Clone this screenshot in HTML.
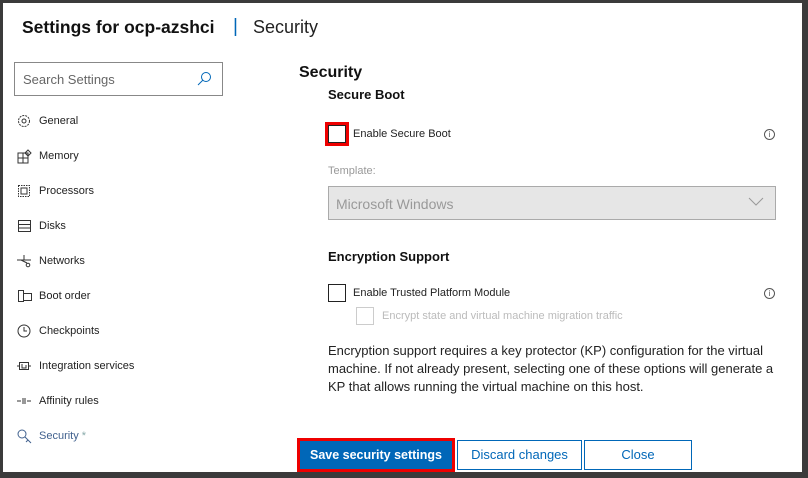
<!DOCTYPE html>
<html><head><meta charset="utf-8"><style>
*{margin:0;padding:0;box-sizing:border-box}
body{width:808px;height:478px;background:#3b3b3b;font-family:"Liberation Sans",sans-serif;position:relative;overflow:hidden}
#w{position:absolute;left:3px;top:3px;width:799px;height:469px;background:#fff}
.a{position:absolute;white-space:nowrap}
.nav{position:absolute;left:17px;font-size:11px;color:#222;white-space:nowrap;width:200px;height:16px}
.nav svg{position:absolute;left:0;top:-1px}
.nav span{position:absolute;left:22px;top:0}
.cb{position:absolute;width:18px;height:18px;border:1px solid #222;background:#fff}
.info{position:absolute;width:11px;height:11px;border:1px solid #555;border-radius:50%;font-size:8px;line-height:9px;text-align:center;color:#555}
.btn{position:absolute;top:440px;height:30px;border:1px solid #0067b8;color:#0067b8;font-size:13px;text-align:center;line-height:28px;background:#fff;white-space:nowrap}
</style></head><body><div id="w"></div>
<div class="a" style="left:22px;top:17px;font-size:17.5px;font-weight:bold;color:#111">Settings for ocp-azshci</div>
<div class="a" style="left:233px;top:16px;font-size:19px;color:#0067b8">|</div>
<div class="a" style="left:253px;top:17px;font-size:18px;color:#222">Security</div>
<div class="a" style="left:14px;top:62px;width:209px;height:34px;border:1px solid #888"></div>
<div class="a" style="left:23px;top:72px;font-size:13px;color:#666">Search Settings</div>
<svg class="a" style="left:196px;top:71px" width="16" height="16"><circle cx="10" cy="6" r="4.5" fill="none" stroke="#0067b8"/><path d="M7 9 L2 14" stroke="#0067b8"/></svg>
<div class="nav" style="top:115px"><svg width="16" height="16"><circle cx="7" cy="7" r="5.5" fill="none" stroke="#333" stroke-dasharray="2 1"/><circle cx="7" cy="7" r="2" fill="none" stroke="#333"/></svg><span>General</span></div>
<div class="nav" style="top:150px"><svg width="16" height="16"><path d="M1 4h10v10H1zM1 9h10M6 4v10" fill="none" stroke="#333"/><path d="M11 1l3 3-3 3-3-3z" fill="none" stroke="#333"/></svg><span>Memory</span></div>
<div class="nav" style="top:185px"><svg width="16" height="16"><rect x="1.5" y="1.5" width="11" height="11" fill="none" stroke="#333" stroke-dasharray="1.5 1"/><rect x="4" y="4" width="6" height="6" fill="none" stroke="#333"/></svg><span>Processors</span></div>
<div class="nav" style="top:220px"><svg width="16" height="16"><rect x="1.5" y="1.5" width="12" height="11" fill="none" stroke="#333"/><path d="M1 5.5h13M1 9h13" stroke="#333"/></svg><span>Disks</span></div>
<div class="nav" style="top:255px"><svg width="16" height="16"><path d="M0 6h14M7 1v5M4 6l6 3" stroke="#333" fill="none"/><circle cx="11" cy="11" r="1.8" fill="none" stroke="#333"/></svg><span>Networks</span></div>
<div class="nav" style="top:290px"><svg width="16" height="16"><rect x="1.5" y="1.5" width="5" height="11" fill="none" stroke="#333"/><rect x="6.5" y="4.5" width="8" height="7" fill="none" stroke="#333"/></svg><span>Boot order</span></div>
<div class="nav" style="top:325px"><svg width="16" height="16"><circle cx="7" cy="7" r="6" fill="none" stroke="#333"/><path d="M7 3v4h3" fill="none" stroke="#333"/></svg><span>Checkpoints</span></div>
<div class="nav" style="top:360px"><svg width="16" height="16"><path d="M0 7h2M12 7h2" stroke="#333"/><rect x="2.5" y="3.5" width="9" height="7" fill="none" stroke="#333"/><path d="M5 5v4h4V6" fill="none" stroke="#333"/></svg><span>Integration services</span></div>
<div class="nav" style="top:395px"><svg width="16" height="16"><path d="M0 7h4M10 7h4M6 4v6M8 4v6" stroke="#333"/></svg><span>Affinity rules</span></div>
<div class="nav" style="top:430px;color:#41618e"><svg width="16" height="16"><circle cx="5" cy="5" r="4" fill="none" stroke="#41618e"/><path d="M8 8l6 6M11 11l-2 2" stroke="#41618e" fill="none"/></svg><span>Security <span style="position:static;color:#8aa">*</span></span></div>
<div class="a" style="left:299px;top:64px;font-size:16px;font-weight:bold;color:#111">Security</div>
<div class="a" style="left:328px;top:87px;font-size:13px;font-weight:bold;color:#111">Secure Boot</div>
<div class="a" style="left:325px;top:122px;width:24px;height:24px;border:3px solid #e00"></div>
<div class="cb" style="left:328px;top:125px"></div>
<div class="a" style="left:353px;top:128px;font-size:11px;color:#222">Enable Secure Boot</div>
<div class="info" style="left:764px;top:129px">i</div>
<div class="a" style="left:328px;top:165px;font-size:11px;color:#999">Template:</div>
<div class="a" style="left:328px;top:186px;width:448px;height:34px;background:#e6e6e6;border:1px solid #aaa"></div>
<div class="a" style="left:336px;top:196px;font-size:14px;color:#999">Microsoft Windows</div>
<svg class="a" style="left:748px;top:197px" width="16" height="10"><path d="M1 1l7 7 7-7" fill="none" stroke="#999"/></svg>
<div class="a" style="left:328px;top:249px;font-size:13px;font-weight:bold;color:#111">Encryption Support</div>
<div class="cb" style="left:328px;top:284px"></div>
<div class="a" style="left:353px;top:287px;font-size:11px;color:#222">Enable Trusted Platform Module</div>
<div class="info" style="left:764px;top:288px">i</div>
<div class="a" style="left:356px;top:307px;width:18px;height:18px;border:1px solid #ccc"></div>
<div class="a" style="left:382px;top:310px;font-size:11px;color:#bbb">Encrypt state and virtual machine migration traffic</div>
<div class="a" style="left:328px;top:342px;font-size:13px;line-height:18px;color:#222;white-space:normal;width:462px">Encryption support requires a key protector (KP) configuration for the virtual machine. If not already present, selecting one of these options will generate a KP that allows running the virtual machine on this host.</div>
<div class="a" style="left:297px;top:438px;width:158px;height:34px;border:3px solid #e00"></div>
<div class="btn" style="left:300px;top:441px;width:152px;height:28px;background:#0067b8;color:#fff;font-weight:bold;font-size:12.5px;line-height:28px;border:none">Save security settings</div>
<div class="btn" style="left:457px;width:125px">Discard changes</div>
<div class="btn" style="left:584px;width:108px">Close</div>
</body></html>
